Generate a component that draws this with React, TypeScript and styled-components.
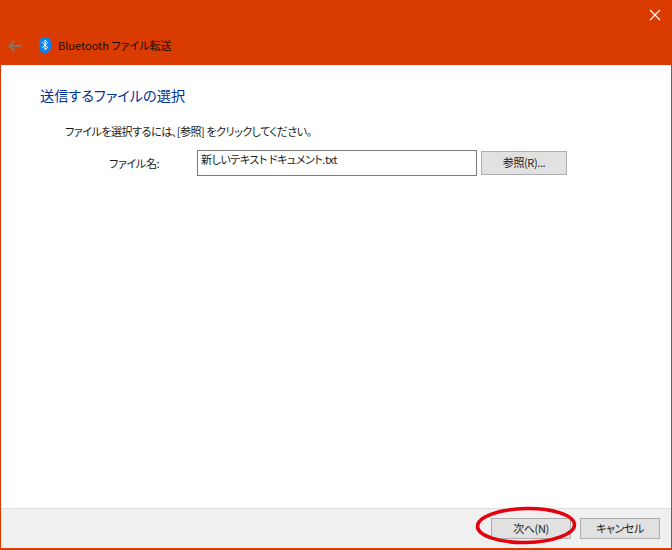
import styled, { createGlobalStyle } from "styled-components";

const GlobalStyle = createGlobalStyle`
  html, body {
    margin: 0;
    padding: 0;
    background: #fff;
  }
  * {
    box-sizing: border-box;
  }
`;

const ORANGE = "#da3b01";
const FONT = `"Noto Sans CJK JP", "Noto Sans", sans-serif`;

const App = () => {
  return (
    <Window>
      <GlobalStyle />
      <TitleBar>
        <TopRow>
          <CloseIcon width="12" height="12" viewBox="0 0 12 12">
            <path d="M1 1 L11 11 M11 1 L1 11" stroke="#fff" strokeWidth="1.1" fill="none" />
          </CloseIcon>
        </TopRow>
        <NavRow>
          <BackIcon width="14" height="12" viewBox="0 0 14 12">
            <path d="M13.5 6 H1.5 M6.5 1 L1.5 6 L6.5 11" stroke="#8a7265" strokeWidth="2" fill="none" />
          </BackIcon>
          <BtIcon width="12" height="16" viewBox="0 0 12 16">
            <rect x="0" y="0" width="12" height="16" rx="5.5" fill="#0a84ee" />
            <path d="M3.2 5 L8.6 10.4 L6 13 V3 L8.6 5.6 L3.2 11" stroke="#fff" strokeWidth="1" fill="none" />
          </BtIcon>
          <WindowTitle>Bluetooth ファイル転送</WindowTitle>
        </NavRow>
      </TitleBar>
      <Content>
        <Heading>送信するファイルの選択</Heading>
        <Hint>ファイルを選択するには、[参照] をクリックしてください。</Hint>
        <FileRow>
          <FileLabel>ファイル名:</FileLabel>
          <FileInput>新しいテキスト ドキュメント.txt</FileInput>
          <BrowseButton>参照(R)...</BrowseButton>
        </FileRow>
      </Content>
      <Footer>
        <Button>次へ(N)</Button>
        <Button>キャンセル</Button>
      </Footer>
      <Circle width="106" height="46" viewBox="0 0 106 46">
        <ellipse
          cx="53"
          cy="21.5"
          rx="48.5"
          ry="17"
          transform="rotate(-1 53 21.5)"
          stroke="#e3000f"
          strokeWidth="3.5"
          fill="none"
        />
      </Circle>
    </Window>
  );
};

export default App;

const Window = styled.div`
  position: relative;
  width: 672px;
  height: 550px;
  display: flex;
  flex-direction: column;
  background: #fff;
  border: 1px solid ${ORANGE};
  border-top: none;
  border-bottom-width: 2px;
  font-family: ${FONT};
  font-feature-settings: "palt";
  overflow: hidden;
`;

const TitleBar = styled.div`
  height: 65px;
  margin: 0 -1px;
  background: ${ORANGE};
  display: flex;
  flex-direction: column;
`;

const TopRow = styled.div`
  height: 30px;
  display: flex;
  justify-content: flex-end;
  padding: 9px 11px 0 0;
`;

const CloseIcon = styled.svg`
  display: block;
`;

const NavRow = styled.div`
  display: flex;
  align-items: center;
  height: 30px;
  padding-left: 8px;
`;

const BackIcon = styled.svg`
  display: block;
  margin-top: 1px;
`;

const BtIcon = styled.svg`
  display: block;
  margin-left: 17px;
`;

const WindowTitle = styled.div`
  margin-left: 7px;
  font-size: 11px;
  line-height: 16px;
  color: #1a0d06;
`;

const Content = styled.div`
  flex: 1;
  padding: 20px 0 0 39px;
`;

const Heading = styled.div`
  font-size: 14.2px;
  line-height: 20px;
  color: #003399;
`;

const Hint = styled.div`
  margin: 18px 0 0 25px;
  font-size: 11px;
  line-height: 16px;
  letter-spacing: -0.45px;
  color: #1a1a1a;
`;

const FileRow = styled.div`
  display: flex;
  align-items: center;
  margin: 11px 0 0 67px;
`;

const FileLabel = styled.div`
  width: 90px;
  padding-left: 2px;
  font-size: 11px;
  line-height: 16px;
  letter-spacing: -0.3px;
  color: #1a1a1a;
`;

const FileInput = styled.div`
  width: 280px;
  height: 26px;
  border: 1px solid #7a7a7a;
  padding: 0 3px;
  font-size: 11px;
  line-height: 16px;
  letter-spacing: -0.45px;
  color: #1a1a1a;
`;

const Button = styled.div`
  width: 80px;
  height: 21px;
  padding-bottom: 2px;
  display: flex;
  align-items: center;
  justify-content: center;
  background: #e1e1e1;
  border: 1px solid #adadad;
  font-size: 11px;
  letter-spacing: -0.4px;
  color: #1a1a1a;
`;

const BrowseButton = styled(Button)`
  width: 86px;
  height: 24px;
  margin-left: 4px;
`;

const Footer = styled.div`
  height: 40px;
  display: flex;
  justify-content: flex-end;
  align-items: flex-start;
  gap: 9px;
  padding: 9px 11px 0 0;
  background: #f0f0f0;
  border-top: 1px solid #dfdfdf;
`;

const Circle = styled.svg`
  position: absolute;
  left: 472px;
  top: 504px;
`;
